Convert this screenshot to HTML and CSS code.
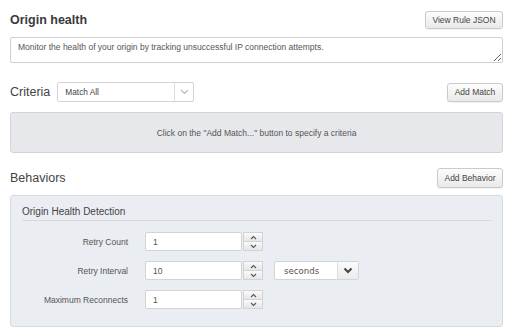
FILE: index.html
```html
<!DOCTYPE html>
<html lang="en">
<head>
  <meta charset="UTF-8" />
  <meta name="viewport" content="width=device-width, initial-scale=1.0" />
  <title>Origin health</title>
  <link rel="stylesheet" href="styles.css">
</head>
<body>
  <div class="page">
    <div class="row head-row">
      <h1 class="title">Origin health</h1>
      <button class="btn btn-json">View Rule JSON</button>
    </div>

    <textarea class="description">Monitor the health of your origin by tracking unsuccessful IP connection attempts.</textarea>

    <!-- Criteria -->
    <div class="row criteria-row">
      <div class="criteria-left">
        <h2 class="section-title">Criteria</h2>
        <div class="select select-match">
          <span class="select-value">Match All</span>
          <span class="select-arrow">
            <svg width="9" height="6" viewBox="0 0 9 6"><path d="M1 1l3.5 3.5L8 1" fill="none" stroke="#b5b8bd" stroke-width="1.2"/></svg>
          </span>
        </div>
      </div>
      <button class="btn btn-match">Add Match</button>
    </div>

    <div class="info-box">Click on the "Add Match..." button to specify a criteria</div>

    <!-- Behaviors -->
    <div class="row behaviors-row">
      <h2 class="section-title">Behaviors</h2>
      <button class="btn btn-behavior">Add Behavior</button>
    </div>

    <div class="panel">
      <div class="panel-header">Origin Health Detection</div>

      <div class="field">
        <label class="field-label">Retry Count</label>
        <input class="field-input" type="text" value="1">
        <div class="stepper">
          <span class="step"><svg width="7" height="5" viewBox="0 0 7 5"><path d="M1 4l2.5-2.5L6 4" fill="none" stroke="#555" stroke-width="1.1"/></svg></span>
          <span class="step"><svg width="7" height="5" viewBox="0 0 7 5"><path d="M1 1l2.5 2.5L6 1" fill="none" stroke="#555" stroke-width="1.1"/></svg></span>
        </div>
      </div>

      <div class="field">
        <label class="field-label">Retry Interval</label>
        <input class="field-input" type="text" value="10">
        <div class="stepper">
          <span class="step"><svg width="7" height="5" viewBox="0 0 7 5"><path d="M1 4l2.5-2.5L6 4" fill="none" stroke="#555" stroke-width="1.1"/></svg></span>
          <span class="step"><svg width="7" height="5" viewBox="0 0 7 5"><path d="M1 1l2.5 2.5L6 1" fill="none" stroke="#555" stroke-width="1.1"/></svg></span>
        </div>
        <div class="select select-unit">
          <span class="select-value">seconds</span>
          <span class="select-arrow">
            <svg width="10" height="7" viewBox="0 0 10 7"><path d="M1.5 1.5L5 5l3.5-3.5" fill="none" stroke="#444" stroke-width="2"/></svg>
          </span>
        </div>
      </div>

      <div class="field">
        <label class="field-label">Maximum Reconnects</label>
        <input class="field-input" type="text" value="1">
        <div class="stepper">
          <span class="step"><svg width="7" height="5" viewBox="0 0 7 5"><path d="M1 4l2.5-2.5L6 4" fill="none" stroke="#555" stroke-width="1.1"/></svg></span>
          <span class="step"><svg width="7" height="5" viewBox="0 0 7 5"><path d="M1 1l2.5 2.5L6 1" fill="none" stroke="#555" stroke-width="1.1"/></svg></span>
        </div>
      </div>
    </div>
  </div>
</body>
</html>
```

FILE: styles.css
```css
body {
  font-family: "Liberation Sans", Arial, sans-serif;
  margin: 0;
  padding: 0;
  background: #fff;
  color: #333;
}

.page {
  padding: 11px 9px 0 10px;
}

.row {
  display: flex;
  justify-content: space-between;
  align-items: center;
}

.title {
  margin: 0;
  font-size: 12.5px;
  font-weight: bold;
  color: #3a3a3a;
}

.section-title {
  margin: 0;
  font-size: 12.5px;
  font-weight: normal;
  color: #444;
}

.btn {
  font-family: "Liberation Sans", Arial, sans-serif;
  font-size: 8.5px;
  color: #444;
  height: 19px;
  padding: 0;
  white-space: nowrap;
  background: linear-gradient(to bottom, #fdfdfd, #e9e9e9);
  border: 1px solid #cacaca;
  border-radius: 3px;
  box-shadow: 0 1px 1px rgba(0, 0, 0, 0.06);
}

.btn-json {
  width: 78px;
  height: 18px;
}

.btn-match {
  width: 56px;
}

.btn-behavior {
  width: 66px;
  height: 20px;
}

.description {
  display: block;
  box-sizing: border-box;
  width: 100%;
  height: 26px;
  margin: 8px 0 0;
  padding: 4px 7px;
  font-family: "Liberation Sans", Arial, sans-serif;
  font-size: 8.5px;
  color: #555;
  border: 1px solid #cfcfcf;
  border-radius: 2px;
  resize: vertical;
}

.criteria-row {
  margin-top: 19px;
}

.criteria-left {
  display: flex;
  align-items: center;
  gap: 7px;
}

.select {
  display: flex;
  box-sizing: border-box;
  background: #fff;
  border: 1px solid #d4d4d4;
  border-radius: 2px;
  height: 20px;
}

.select-value {
  flex: 1;
  display: flex;
  align-items: center;
  padding-left: 7px;
  font-size: 8.3px;
  color: #444;
}

.select-arrow {
  display: flex;
  align-items: center;
  justify-content: center;
  width: 18px;
  border-left: 1px solid #dcdcdc;
}

.select-match {
  width: 137px;
}

.info-box {
  margin-top: 10px;
  height: 41px;
  box-sizing: border-box;
  display: flex;
  align-items: center;
  justify-content: center;
  background: #e7e8ec;
  border: 1px solid #d3d4d8;
  border-radius: 3px;
  font-size: 8.5px;
  color: #555;
}

.behaviors-row {
  margin-top: 15px;
}

.panel {
  margin-top: 7px;
  box-sizing: border-box;
  height: 132px;
  padding: 10px 10px 0 11px;
  background: #eaedf1;
  border: 1px solid #d7dade;
  border-radius: 3px;
}

.panel-header {
  font-size: 10px;
  color: #444;
  padding-bottom: 3px;
  border-bottom: 1px solid #d6d9de;
  margin-bottom: 11px;
}

.field {
  display: flex;
  align-items: center;
  height: 19px;
  margin-bottom: 10px;
}

.field-label {
  width: 106px;
  text-align: right;
  font-size: 8.5px;
  color: #555;
  margin-right: 17px;
}

.field-input {
  box-sizing: border-box;
  width: 97px;
  height: 19px;
  padding: 0 7px;
  font-family: "Liberation Sans", Arial, sans-serif;
  font-size: 8.5px;
  color: #555;
  background: #fff;
  border: 1px solid #d2d4d7;
  border-radius: 2px;
}

.stepper {
  display: flex;
  flex-direction: column;
  margin-left: 1px;
  width: 20px;
  height: 19px;
}

.step {
  flex: 1;
  display: flex;
  align-items: center;
  justify-content: center;
  background: linear-gradient(to bottom, #fafafa, #e6e6e6);
  border: 1px solid #d3d3d3;
}

.step + .step {
  border-top: none;
}

.select-unit {
  width: 85px;
  height: 19px;
  margin-left: 11px;
  border-color: #d2d4d7;
}

.select-unit .select-value {
  font-family: "DejaVu Sans", Verdana, sans-serif;
  font-size: 8.6px;
  color: #555;
  padding-left: 9px;
}

.select-unit .select-arrow {
  width: 20px;
  background: linear-gradient(to bottom, #fbfbfb, #ebebeb);
}
```
